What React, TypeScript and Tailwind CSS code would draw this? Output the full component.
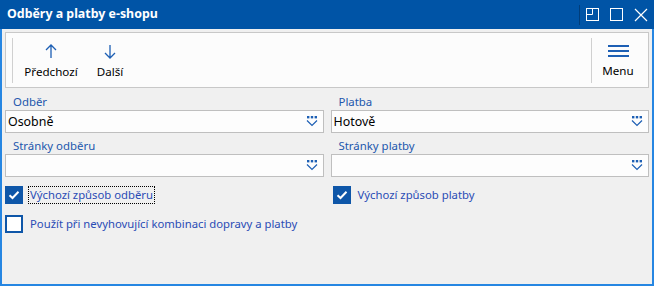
import React from "react";

const F = { fontFamily: '"Noto Sans", "Open Sans", sans-serif' };

function DropIcon() {
  return (
    <svg width="12" height="11" viewBox="0 0 12 11" className="shrink-0">
      <rect x="1" y="0" width="2.4" height="2.4" fill="#1d5fb4" />
      <rect x="4.8" y="0" width="2.4" height="2.4" fill="#1d5fb4" />
      <rect x="8.6" y="0" width="2.4" height="2.4" fill="#1d5fb4" />
      <path d="M1 4.5 L6 9.5 L11 4.5" stroke="#1d5fb4" strokeWidth="1.2" fill="none" />
    </svg>
  );
}

function Field({ label, value }: { label: string; value?: string }) {
  return (
    <div className="flex flex-col">
      <div className="pl-[8px] text-[11.4px] leading-[16px] text-[#2257ad] h-[16px]">{label}</div>
      <div className="h-[23px] bg-[#fdfdfd] border border-[#bfbfbf] flex items-center pl-[2px] pr-[5px]">
        <span className="flex-1 text-[12.4px] text-black leading-[16px]">{value}</span>
        <DropIcon />
      </div>
    </div>
  );
}

function Check({ label, focus }: { label: string; focus?: boolean }) {
  return (
    <div className="flex items-center gap-[6px] h-[18px]">
      <div className="w-[18px] h-[18px] bg-[#0e56a8] flex items-center justify-center">
        <svg width="12" height="10" viewBox="0 0 12 10">
          <path d="M1.5 5.2 L4.5 8 L10.5 1.8" stroke="white" strokeWidth="2" fill="none" />
        </svg>
      </div>
      <span
        className={
          "text-[11.3px] leading-[16px] text-[#2a4cb5] px-[1px] " +
          (focus ? "outline outline-1 outline-dotted outline-black" : "")
        }
      >
        {label}
      </span>
    </div>
  );
}

export default function App() {
  return (
    <div style={F} className="w-[654px] h-[286px] bg-[#f0f0f0] border-x-2 border-b-2 border-[#2686e2] flex flex-col">
      <div className="h-[29px] bg-[#0054a6] flex items-center -mx-[2px] pl-[7px] pr-[6px]">
        <span className="flex-1 text-white font-bold text-[12.4px]">Odběry a platby e-shopu</span>
        <div className="w-px h-[20px] bg-[#003d7a] mr-[6px]" />
        <svg width="13" height="13" viewBox="0 0 13 13" className="mr-[11px]">
          <rect x="0.5" y="0.5" width="12" height="12" fill="none" stroke="white" />
          <path d="M6.5 0.5 V6.5 H0.5" fill="none" stroke="white" />
        </svg>
        <svg width="13" height="13" viewBox="0 0 13 13" className="mr-[11px]">
          <rect x="0.5" y="0.5" width="12" height="12" fill="none" stroke="white" />
        </svg>
        <svg width="14" height="14" viewBox="0 0 14 14">
          <path d="M1 1 L13 13 M13 1 L1 13" stroke="white" strokeWidth="1.2" />
        </svg>
      </div>
      <div className="mx-[3px] mt-[3px] h-[56px] bg-[#fcfcfc] border border-[#c8c8c8] flex items-center pl-[6px] pr-[4px]">
        <div className="w-px h-[45px] bg-[#d0d0d0]" />
        <div className="flex flex-col items-center ml-[11px] w-[54px] pt-[3px]">
          <svg width="12" height="15" viewBox="0 0 12 15">
            <path d="M6 1 V14 M1 6 L6 1 L11 6" stroke="#1d5fb4" strokeWidth="1.3" fill="none" />
          </svg>
          <span className="text-[11.6px] text-black mt-[5px] leading-[16px]">Předchozí</span>
        </div>
        <div className="flex flex-col items-center ml-[12px] w-[40px] pt-[3px]">
          <svg width="12" height="15" viewBox="0 0 12 15">
            <path d="M6 1 V14 M1 9 L6 14 L11 9" stroke="#1d5fb4" strokeWidth="1.3" fill="none" />
          </svg>
          <span className="text-[11.6px] text-black mt-[5px] leading-[16px]">Další</span>
        </div>
        <div className="flex-1" />
        <div className="w-px h-[45px] bg-[#d0d0d0]" />
        <div className="flex flex-col items-center w-[52px] pt-[3px]">
          <div className="flex flex-col gap-[3px] w-[21px] mt-[1px]">
            <div className="h-[2px] bg-[#1d5fb4]" />
            <div className="h-[2px] bg-[#1d5fb4]" />
            <div className="h-[2px] bg-[#1d5fb4]" />
          </div>
          <span className="text-[11.6px] text-black mt-[6px] leading-[16px]">Menu</span>
        </div>
      </div>
      <div className="grid grid-cols-2 gap-x-[7px] px-[3px] mt-[6px]">
        <Field label="Odběr" value="Osobně" />
        <Field label="Platba" value="Hotově" />
        <div className="mt-[5px]"><Field label="Stránky odběru" /></div>
        <div className="mt-[5px]"><Field label="Stránky platby" /></div>
        <div className="mt-[9px]"><Check label="Výchozí způsob odběru" focus /></div>
        <div className="mt-[9px] pl-[2px]"><Check label="Výchozí způsob platby" /></div>
      </div>
      <div className="flex items-center gap-[6px] px-[3px] mt-[11px]">
        <div className="w-[18px] h-[18px] border-2 border-[#0e56a8] bg-white" />
        <span className="text-[11.3px] leading-[16px] text-[#2a4cb5] px-[1px]">Použít při nevyhovující kombinaci dopravy a platby</span>
      </div>
    </div>
  );
}
